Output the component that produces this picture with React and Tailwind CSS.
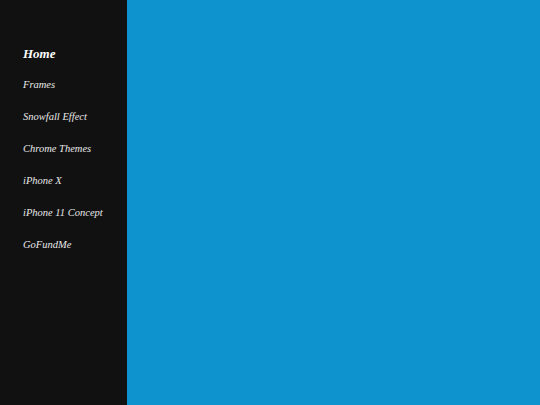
export default function App() {
  const items = ["Frames", "Snowfall Effect", "Chrome Themes", "iPhone X", "iPhone 11 Concept", "GoFundMe"];
  return (
    <div className="flex h-[405px] w-[540px]" style={{ fontFamily: '"Liberation Serif", "Times New Roman", serif' }}>
      <nav className="w-[127px] shrink-0 bg-[#111111] pl-[23px] pt-[45px]">
        <div className="h-[18px] text-[13px] font-bold italic leading-[18px] text-white">Home</div>
        <ul className="mt-[15px] flex flex-col gap-[18px]">
          {items.map((t) => (
            <li key={t} className="h-[14px] text-[10.5px] italic leading-[14px] text-[#e8e8e8]">{t}</li>
          ))}
        </ul>
      </nav>
      <main className="flex-1 bg-[#0e93ce]" />
    </div>
  );
}
